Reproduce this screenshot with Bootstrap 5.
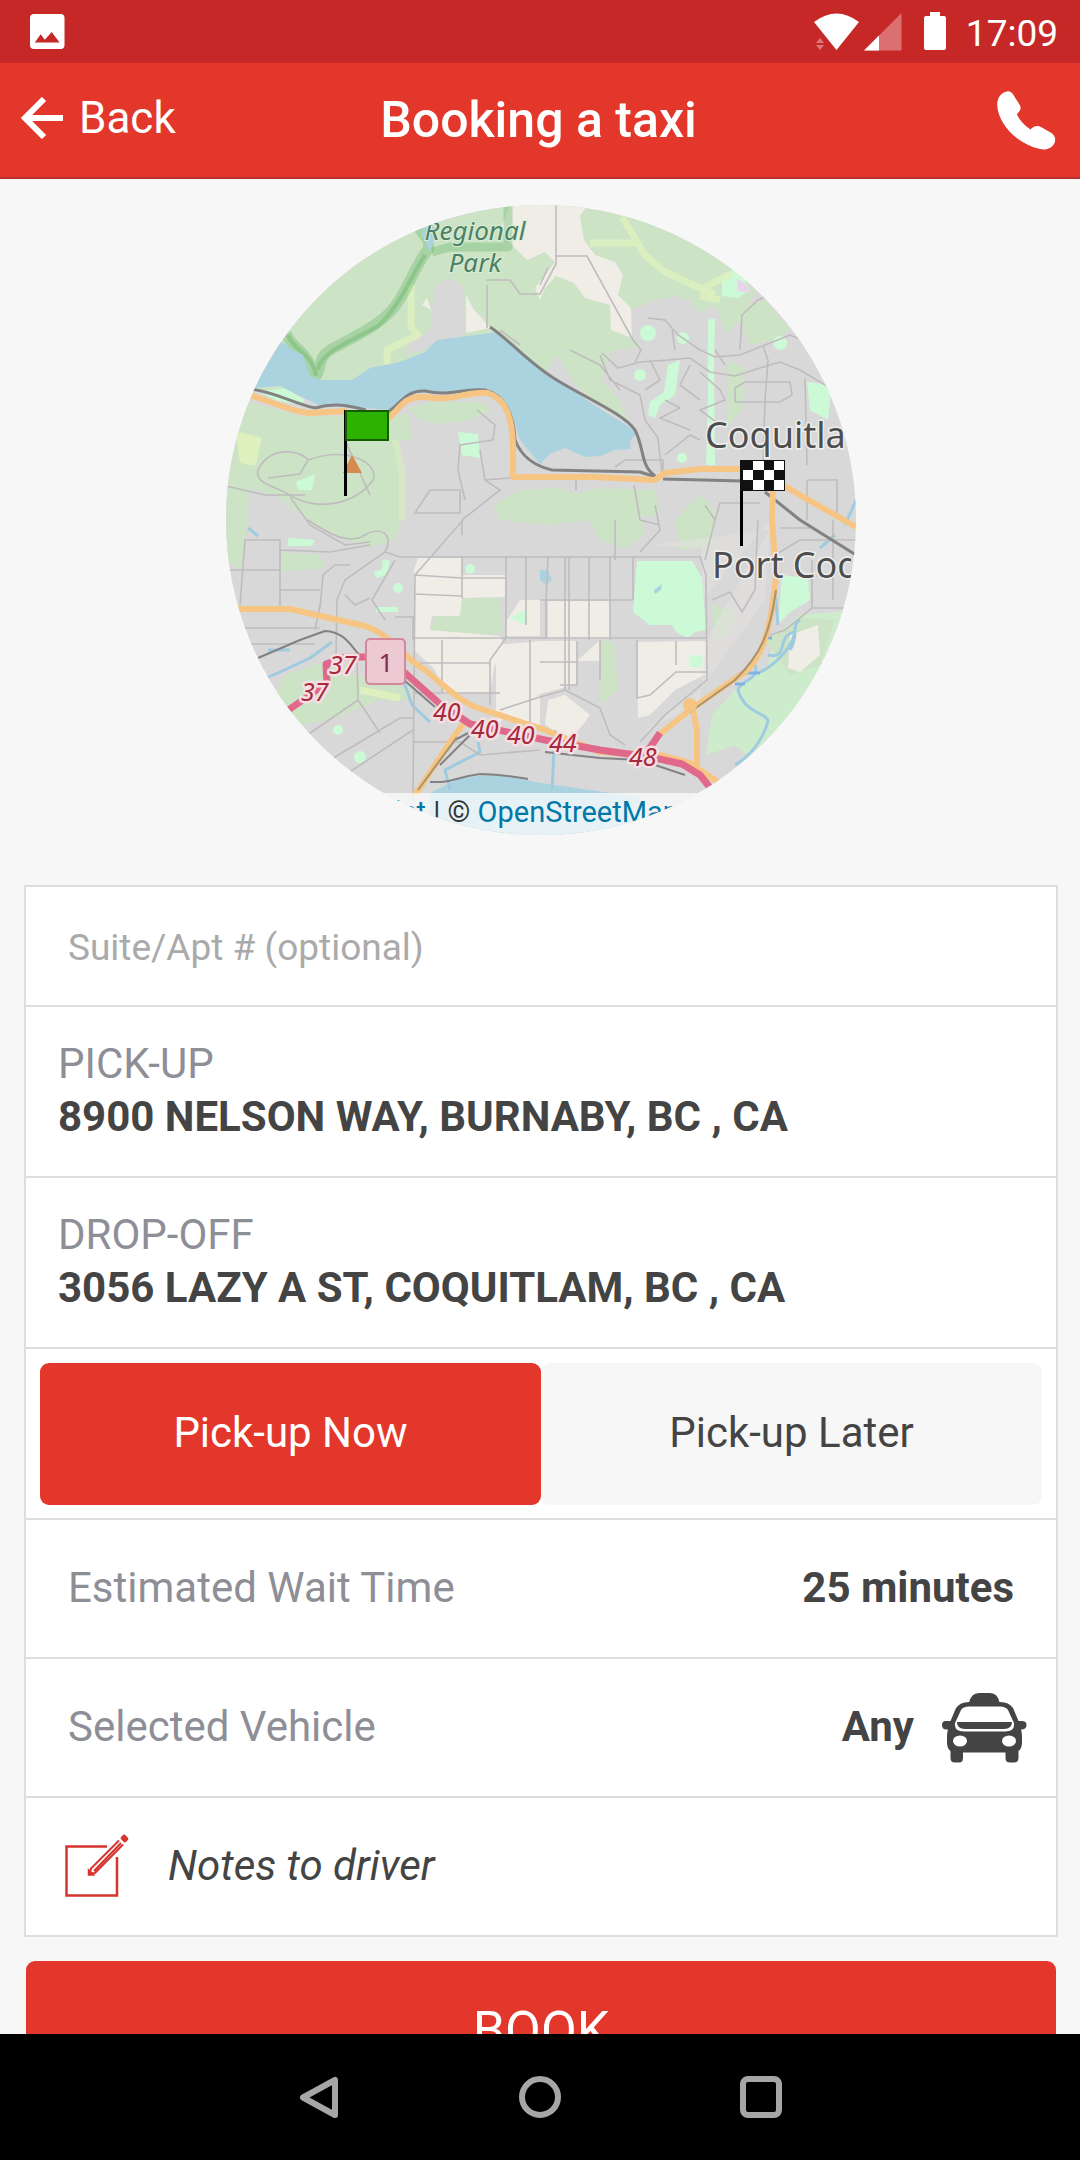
<!DOCTYPE html>
<html lang="en">
<head>
<meta charset="utf-8">
<meta name="viewport" content="width=device-width, initial-scale=1">
<title>Booking a taxi</title>
<link href="https://cdn.jsdelivr.net/npm/bootstrap@5.3.0/dist/css/bootstrap.min.css" rel="stylesheet">
<style>
  :root { --brand: #e3372b; --brand-dark: #c62828; --ink: #444; --soft: #8e8e97; --line: #dedede; --paper: #f7f7f7; }
  body { font-family: Roboto, "Liberation Sans", sans-serif; font-size: 42px; line-height: 53px; color: var(--ink); background: var(--paper); }
  button { color: inherit; }
  .status-bar { background: var(--brand-dark); height: 63px; padding: 0 22px 0 30px; font-size: 37px; }
  .status-bar time { padding-top: 3px; }
  .status-icons { gap: 20px; }
  .app-bar { background: var(--brand); height: 116px; padding: 0 24px 0 21px; border-bottom: 2px solid #b83030; }
  .app-bar h1 { font-size: 50px; font-weight: 500; }
  .app-bar a { font-size: 44px; padding-top: 3px; }
  .app-body { padding: 26px 22px 24px 24px; scrollbar-width: none; }
  .app-body::-webkit-scrollbar { display: none; }
  .map-disc { width: 630px; max-width: 100%; aspect-ratio: 1; margin-bottom: 50px; }
  .map-credit { height: 42px; padding-left: 112px; font-size: 29px; line-height: 38px; background: rgba(255,255,255,.7); color: #333; }
  .map-credit a { color: #0078a8; }
  .booking { --bs-list-group-border-color: var(--line); --bs-list-group-border-width: 2px; --bs-list-group-border-radius: 0; --bs-list-group-color: var(--ink); --bs-list-group-action-color: var(--ink); --bs-list-group-item-padding-x: 42px; --bs-list-group-item-padding-y: 0; }
  .booking > .list-group-item { min-height: 139px; padding-bottom: 3px; }
  .booking > .suite-item { min-height: 122px; padding-top: 3px; padding-bottom: 0; }
  .booking > .stop-item { min-height: 171px; padding-left: 32px; padding-right: 32px; }
  .booking > .when-item { min-height: 171px; padding: 0 14px; }
  .booking > .vehicle-item { padding-right: 29px; }
  .booking > .notes-item { padding-left: 39px; }
  .suite-box { font-size: 37px; line-height: 44px; }
  .suite-box::placeholder { color: #aaa; opacity: 1; }
  .soft-text { color: var(--soft); }
  .when-btn { --bs-btn-font-size: 42px; --bs-btn-line-height: 54px; --bs-btn-padding-y: 43px; --bs-btn-border-radius: 9px; --bs-btn-color: var(--ink); --bs-btn-bg: #f7f7f7; --bs-btn-active-bg: var(--brand); --bs-btn-active-color: #fff; padding-bottom: 45px; }
  .book-btn { --bs-btn-font-size: 52px; --bs-btn-line-height: 60px; --bs-btn-padding-y: 40px; --bs-btn-border-radius: 9px; --bs-btn-color: #fff; --bs-btn-bg: var(--brand); --bs-btn-hover-bg: var(--brand-dark); --bs-btn-hover-color: #fff; margin: 24px 2px 0; }
  .system-nav { height: 126px; }
  .system-nav .btn { width: 221px; }
  .gap-note { gap: 39px; }
  .gap-car { gap: 28px; }
  svg { display: block; flex: none; }
</style>
</head>
<body class="d-flex flex-column vh-100 overflow-hidden">
<div class="status-bar d-flex align-items-center justify-content-between text-white flex-shrink-0">
  <svg width="35" height="35" viewBox="0 0 35 35" aria-hidden="true"><rect width="34.500" height="35" rx="4" fill="#fff"/><path d="M4.800 28.500 10.700 20.300 14.800 25.700 21.700 18 29.600 28.500Z" fill="#c62828"/></svg>
  <div class="status-icons d-flex align-items-center">
    <svg width="132" height="40" viewBox="814 12 132 40" fill="#fff" aria-hidden="true">
      <path d="M814 22Q836.500 5 859 22L836.500 50Z"/>
      <path d="M816 43l4-5 4 5zM816 45h8l-4 5z" fill="#dc7777"/>
      <path d="M864 50.500 901.500 13V50.500Z" fill="#dc7070"/><path d="M864 50.500 879 35.500V50.500Z"/>
      <path d="M930 12h10v4h4q2 0 2 2v30q0 2-2 2h-18q-2 0-2-2V18q0-2 2-2h4z"/>
    </svg>
    <time datetime="17:09">17:09</time>
  </div>
</div>

<header class="app-bar d-flex align-items-center text-white flex-shrink-0">
  <div class="col">
    <a href="#" class="d-inline-flex align-items-center gap-3 text-white text-decoration-none">
      <svg width="42" height="42" viewBox="0 0 42 42" fill="none" stroke="#fff" stroke-width="6" aria-hidden="true"><path d="M23 2 4 21 23 40M4 21H42"/></svg>
      Back
    </a>
  </div>
  <h1 class="m-0">Booking a taxi</h1>
  <div class="col d-flex justify-content-end">
    <button type="button" class="btn border-0 p-0" aria-label="Call">
      <svg width="59" height="59" viewBox="0 0 59 59" fill="#fff" aria-hidden="true"><path d="M10.500.300C13 0 15 1.500 16.500 4L22.500 13.500C24 16 24 18 22.500 20L19.800 23.600C23 30 28 35 33.500 38.600C36 35.500 40 34 44 36L54.500 42C58 44.500 59 48 57.500 52C55 57.500 49 59.500 43 58C20 53 1 33 .200 14C0 7 4 1.500 10.500.300Z"/></svg>
    </button>
  </div>
</header>

<main class="app-body flex-grow-1 overflow-auto">
  <div class="map-disc position-relative rounded-circle overflow-hidden mx-auto">
    <svg width="100%" viewBox="226 205 630 630" role="img" aria-label="Route map from Burnaby to Coquitlam">
      <defs><clipPath id="tile"><rect x="226" y="205" width="625" height="630"/></clipPath></defs>
      <rect x="226" y="205" width="630" height="630" fill="#d9d8d8"/>
      <!-- forest -->
      <g fill="#cde3c6">
        <path d="M200 190H780V285L756 290 740 320 727 335 716 306 695 313 680 296 655 300 632 310 630 335 640 346 610 352 602 380 575 372 560 352 545 375 500 340 440 345 400 370 340 392H200Z"/>
        <path d="M226 398 250 402 300 416 345 416 388 420 408 412 412 440 400 440 402 520 395 540 370 547 345 540 310 522 280 498 226 480Z"/>
        <path d="M408 408 430 402 480 402 492 410 470 420 440 424 420 420Z"/>
        <path d="M493 505 520 490 560 488 590 500 640 510 645 535 625 548 600 540 590 520 550 525 500 520Z"/>
        <path d="M675 520 700 495 715 510 712 545 680 550Z"/>
        <path d="M440 600 500 597 502 633 460 636 430 630 435 616ZM712 605 735 612 730 635 715 640Z"/>
        <path d="M280 552 320 555 325 568 280 572ZM285 675 330 660 355 675 412 690 410 700 380 700 330 720 300 725 275 695Z"/>
        <path d="M602 640 614 642 618 690 600 705Z"/>
        <path d="M555 350 590 370 620 400 630 425 600 405 575 385Z"/>
        <path d="M728 360 745 370 742 410 728 425Z"/>
        <path d="M226 470 250 480 246 540 240 570 226 560ZM735 308 765 300 790 330 775 340 750 345ZM570 495 600 488 655 490 660 515 610 520 580 515Z"/>
      </g>
      <path d="M706 755 712 715 735 690 768 665 775 635 800 615 856 610V740L760 765 735 745Z" fill="#cdeccb"/>
      <path d="M765 640 800 618 835 620 820 665 790 675Z" fill="#cde3c6"/>
      <!-- open land -->
      <g fill="#f0ede7">
        <path d="M510 205H588L580 216 584 240 595 255 615 262 623 275 618 295 631 308 632 338 611 330 610 305 585 298 574 283 556 276 545 288 540 300 535 288 555 262 545 252 527 260 512 245 500 230Z"/>
        <path d="M466 295 474 310 482 318 490 328 466 333ZM427 298 431 310 422 305Z"/>
        <path d="M418 558 462 558V575H505V597L462 598 460 616 432 616 430 630 500 636 504 645 494 668 490 692 445 694 435 670 414 650V570Z"/>
        <path d="M548 601 610 601V639H548ZM540 641 577 641V661H600V640L577 661 576 684 555 690 540 694 520 705 496 725V645ZM520 600 540 600V636H505L507 620ZM637 642 706 641V674L675 690 650 715 638 718ZM548 700 565 695 590 715 585 722 570 740 545 725ZM480 715 540 695V730L490 712Z"/>
        <path d="M790 635 818 625 820 655 800 672 788 668Z"/>
      </g>
      <g fill="#d9d8d8">
        <path d="M435 285 450 278 462 285 466 335 440 340 425 350 405 355 410 342 430 330Z"/>
        <path d="M463 556H505V575H463Z"/>
        <path d="M244 540 262 540 280 555 275 605 240 605Z"/>
        <path d="M632 318 655 300 690 300 702 320 690 350 660 345 640 350Z"/>
      </g>
      <path d="M650 545 702 548 702 600 770 520 765 600 700 690 640 735 700 700 706 640 770 530Z" fill="#e2e1e0" opacity=".6"/>
      <!-- parks -->
      <g fill="#cdfad6">
        <path d="M637 561H692L702 578 706 630 695 632 688 638 676 632 672 625H650L633 612Z"/>
        <path d="M722 275 738 268 750 290 738 298 722 296Z"/>
        <path d="M782 575 808 578 810 600 790 612 778 625Z"/>
        <path d="M807 382 832 385 828 420 810 410Z"/>
        <path d="M708 320 715 318 714 360 715 465 706 465 708 400Z"/>
        <path d="M668 365 680 360 675 395 660 405 655 418 648 415 650 402 664 392Z"/>
        <path d="M288 538 315 540 312 546 288 546ZM458 432 478 434 480 458 462 455ZM296 482 315 474 312 490 298 490ZM376 607 398 607 398 612 376 612ZM510 618 525 610 525 625ZM690 655 703 656 702 668 690 667Z"/>
        <path d="M260 392 285 388 305 400 300 405 275 400Z"/>
        <circle cx="648" cy="333" r="8"/><circle cx="683" cy="338" r="6"/><circle cx="640" cy="375" r="6"/><circle cx="780" cy="343" r="7"/><circle cx="398" cy="588" r="5"/><circle cx="470" cy="569" r="5"/><circle cx="360" cy="757" r="6"/><circle cx="338" cy="730" r="5"/><circle cx="682" cy="458" r="5"/>
      </g>
      <path d="M737 278 748 286 750 293 738 291Z" fill="#e9d5ea"/>
      <g fill="none" stroke="#ddf0bd" stroke-width="7" stroke-linejoin="round">
        <path d="M590 243H635M622 217 645 255 665 272 715 295M700 290 732 273M720 300 700 296M411 285V327L418 335 387 350V368" opacity=".8"/>
        <path d="M375 575 385 572 386 560" stroke="#cdfad6"/>
        <path d="M240 436 258 440 253 462 243 460Z" fill="#ddf0bd"/><path d="M360 690 400 698" /><path d="M395 440 402 470V520" opacity=".5"/>
      </g>
      <g fill="none" stroke="#6fb96f" stroke-linejoin="round">
        <path d="M286 333C292 350 308 350 314 376 322 376 316 358 330 350 352 338 378 326 392 310 408 292 416 262 428 250 432 240 420 232 415 222" stroke-width="11" opacity=".4"/>
        <path d="M288 335C294 352 312 352 316 376M318 370C320 352 350 342 378 326 400 306 412 275 425 255" stroke-width="4" opacity=".45"/>
        <path d="M432 252 450 247H508V206" stroke-width="9" opacity=".4"/>
      </g>
      <!-- water -->
      <g fill="#aad3df">
        <path d="M226 350 283 342 292 350 303 355 310 376 320 380 352 380 370 368 400 362 425 352 437 340 475 335 497 332 515 345 535 365 552 378 575 392 605 412 628 426 637 432 630 442 631 449 615 450 600 456 585 457 565 448 550 454 540 464 520 440 512 415 498 398 484 392 460 394 430 392 415 393 400 405 388 410 345 406 318 405 300 396 280 386 226 390Z"/>
        <path d="M428 205 436 235 430 252 422 235Z"/>
        <path d="M430 793 460 778 500 774 535 782 590 790 640 797V835H430Z"/>
        <path d="M540 570 548 570 552 580 546 585 540 580ZM654 590 662 584 661 590 655 594Z"/>
      </g>
      <g fill="none" stroke="#9fcbe0" stroke-width="3" stroke-linejoin="round">
        <path d="M262 680 280 672 310 658 332 642M404 682 412 705 430 722M450 790 445 770 480 752 478 742M555 730 552 790" />
        <path d="M775 590 778 625M755 665C760 680 740 680 738 690 745 715 768 712 768 722 762 740 752 755 735 765M768 655C790 660 775 635 795 632 790 655 765 670 760 672M790 650C800 635 790 625 800 620M856 500 845 525M835 535 820 548M248 528 258 536M268 650 290 650"/>
        <path d="M764 638H772M745 673H760M735 684H745" stroke="#7fb3e6"/>
      </g>
      <!-- local streets -->
      <g fill="none" stroke="#bfbcbe" stroke-width="1.600">
        <path d="M486 280H510L520 294H540L556 264V205M556 256H587L633 340 641 350 635 362M487 285V328"/>
        <path d="M540 285 548 268M500 330 520 345"/>
        <path d="M602 353 618 368 640 362 668 360 690 358 710 372 735 376 760 368 780 362 800 370 825 385 845 392M600 355 610 380 640 395 645 420 658 438 662 475M763 346 768 360 765 400 763 465M805 378 807 465M672 330 675 350M648 318 665 320 678 335 700 350 715 357 740 355 765 345 790 335 815 345M740 350 742 315 758 300 780 290M735 388 745 382H790L792 395 780 402H735ZM700 372 720 390 725 400 700 410 720 425M665 400 680 408 660 418 690 430M570 350 600 365 620 390M725 365 715 350M650 360 660 380 645 390M690 365 680 385 700 400"/>
        <path d="M258 470C270 445 300 450 308 460 350 445 380 465 373 480 355 505 320 510 295 498 275 485 255 485 258 470ZM226 486 265 495H305M268 478 300 474 308 460M290 497 310 525 345 545 370 542M308 520C330 535 350 545 365 535 380 525 395 535 385 552L345 580 337 600 336 655"/>
        <path d="M477 410 495 425 493 440 460 445 458 470 465 500M485 480 500 490 462 520M430 490H460V513H415L430 490M345 440 370 495M480 450 485 480 510 478"/>
        <path d="M575 477H530M576 478V490M634 485 640 520 660 525M715 520 720 503H760M807 480H837V515M807 480V520M665 455 690 435 700 440M663 475V460H625L615 467"/>
        <path d="M385 552 400 557H700L706 575 707 680 665 715 640 742M463 520 415 575 413 800M462 535V520M462 557V598M506 557V638L490 660V705M526 557V625M414 638H706M414 575 462 578H506M414 594 462 596M442 640V693M414 663H490M414 693H500M530 640V730M500 710 540 697 565 690V557M548 557 546 600V638M569 557V690M589 557V640M610 557V640M540 600H633M633 557V600M565 690 600 708 610 735 625 745M577 641V685H560M600 640V680M637 640V698L650 695 676 672 706 672M676 641V665M540 662H577"/>
        <path d="M244 540H280V608M226 570H280M280 590H320M245 540 240 605M235 628H320M240 644H315M320 608 323 575 335 565H350M280 550 330 552 370 545M320 605 315 630M357 660 358 700 380 733M330 760 400 718H413M300 740 358 700M345 775 413 730M413 742H460L480 755 540 750M395 560 372 600 385 620M345 595 355 605 370 598M395 617H413V640"/>
        <path d="M705 560 715 520 705 505M712 600 730 592 742 612 755 590 757 540 758 520M770 635 785 630 812 608H850M812 608V560M775 555 800 540H856M780 528H810M833 520V600M655 505 660 530 640 552M615 520V560"/>
      </g>
      <!-- railways -->
      <g fill="none" stroke="#828282" stroke-width="3" stroke-linejoin="round">
        <path d="M250 389C275 392 295 404 315 408 335 402 350 406 366 410M388 412C400 405 405 390 425 391 450 397 460 388 485 390 505 395 514 415 515 440 522 458 535 466 552 470L640 472 656 477"/>
        <path d="M490 327C510 340 530 365 560 382 590 400 625 415 635 430 645 450 640 465 655 476M663 479 742 481M765 492 800 520 856 555"/>
        <path d="M258 658 300 640 325 631C345 632 350 645 362 658M404 680 435 707M418 790 455 740 468 733M430 782C455 783 450 778 480 774 510 775 520 778 528 779" stroke-width="2"/>
        <path d="M470 735 440 765M545 752 600 758 640 760 685 775" stroke-width="2"/>
      </g>
      <!-- primary roads -->
      <g fill="none" stroke="#f7c583" stroke-width="6" stroke-linejoin="round">
        <path d="M248 395C270 400 290 412 310 413L347 411M388 418C400 410 402 396 425 397 455 402 465 391 488 393 508 400 512 420 513 445V477H595L655 480 665 473 700 469H745M766 475 800 495 856 527M773 490 772 520 776 575C772 620 765 655 745 672L690 710 655 738M692 704 697 730V765"/>
        <path d="M236 609H290L365 626C390 634 400 655 425 670 440 682 460 702 478 708L545 730 600 752 660 755 690 763 722 785M415 795 455 735 465 722"/>
      </g>
      <path d="M776 590C770 635 760 655 735 680L690 712M418 790 457 737" fill="none" stroke="#a8946f" stroke-width="2"/>
      <circle cx="690" cy="705" r="7" fill="#f7c583"/>
      <!-- motorway -->
      <g fill="none" stroke="#e0688a" stroke-width="7" stroke-linejoin="round"><path d="M287 711 327 683 326 664 345 657H368M404 672 440 704 470 724 545 740 600 750 650 757 682 764 700 775 712 790M647 752 660 733" /></g>
      <!-- place names -->
      <g font-family="'Noto Sans','Open Sans',sans-serif">
        <g font-size="26" font-style="italic" fill="#4c8063" stroke="#d8eed6" stroke-width="2" paint-order="stroke" text-anchor="middle"><text x="475" y="240">Regional</text><text x="475" y="272">Park</text></g>
        <g font-size="36" fill="#4d4d4d" stroke="#eee" stroke-width="3" paint-order="stroke" clip-path="url(#tile)"><text x="705" y="448">Coquitla</text><text x="712" y="578">Port Coq</text></g>
        <g font-size="25" font-style="italic" fill="#a8283c" stroke="#f6dfe3" stroke-width="5" paint-order="stroke" stroke-linejoin="round">
          <text x="329" y="674">37</text><text x="301" y="701">37</text><text x="433" y="721">40</text><text x="471" y="738">40</text><text x="507" y="744">40</text><text x="549" y="752">44</text><text x="629" y="766">48</text>
        </g>
        <rect x="366" y="639" width="39" height="45" rx="4" fill="#edc9d3" stroke="#d4889c" stroke-width="2"/>
        <text x="386" y="672" font-size="26" fill="#803048" text-anchor="middle">1</text>
      </g>
      <path d="M343 473 352 455 362 473Z" fill="#d68a50"/>
      <!-- pick-up and drop-off flags -->
      <path d="M345.500 410V496M741.500 460V546" stroke="#000" stroke-width="3"/>
      <rect x="346" y="411" width="42" height="29" fill="#2db200" stroke="#155c00" stroke-width="2"/>
      <rect x="740" y="460" width="45" height="31" fill="#111"/>
      <path d="M753 461h11v9h-11zM774 461h10v9h-10zM743 470h10v10h-10zM764 470h10v10h-10zM753 480h11v10h-11zM774 480h10v10h-10z" fill="#fff"/>
    </svg>
    <div class="map-credit position-absolute bottom-0 start-0 w-100 text-nowrap"><a href="#" class="text-decoration-none">Leaflet</a> | © <a href="#" class="text-decoration-none">OpenStreetMap</a></div>
  </div>

  <form>
    <div class="list-group booking">
      <div class="list-group-item suite-item d-flex align-items-center">
        <label for="suite" class="visually-hidden">Suite or apartment number</label>
        <input id="suite" type="text" class="suite-box form-control-plaintext p-0 border-0" placeholder="Suite/Apt # (optional)">
      </div>
      <button type="button" class="list-group-item list-group-item-action stop-item d-flex flex-column justify-content-center">
        <span class="soft-text">PICK-UP</span>
        <strong>8900 NELSON WAY, BURNABY, BC , CA</strong>
      </button>
      <button type="button" class="list-group-item list-group-item-action stop-item d-flex flex-column justify-content-center">
        <span class="soft-text">DROP-OFF</span>
        <strong>3056 LAZY A ST, COQUITLAM, BC , CA</strong>
      </button>
      <div class="list-group-item when-item d-flex align-items-center" role="group" aria-label="Pick-up time">
        <input type="radio" class="btn-check" name="when" id="now" checked><label class="btn when-btn border-0 col" for="now">Pick-up Now</label>
        <input type="radio" class="btn-check" name="when" id="later"><label class="btn when-btn border-0 col" for="later">Pick-up Later</label>
      </div>
      <div class="list-group-item d-flex align-items-center justify-content-between">
        <span class="soft-text">Estimated Wait Time</span><strong>25 minutes</strong>
      </div>
      <button type="button" class="list-group-item list-group-item-action vehicle-item d-flex align-items-center justify-content-between">
        <span class="soft-text">Selected Vehicle</span>
        <span class="d-flex align-items-center gap-car"><strong>Any</strong>
          <svg class="mt-1" width="85" height="70" viewBox="0 0 85 70" fill="#444" aria-hidden="true">
            <path d="M27 10Q29 0 37 0H48Q56 0 57.500 10Z"/>
            <path fill-rule="evenodd" d="M27 9H58Q67 9 71 15L76.500 28H80Q84.500 28 84.500 32T80 36.500H79Q80 39 80 43V50Q80 55 76.500 58V65Q76.500 69.500 72 69.500H68Q63.500 69.500 63.500 65V59.500H21V65Q21 69.500 17 69.500H13Q8.500 69.500 8.500 65V58Q5 55 5 50V43Q5 39 6 36.500H4.500Q0 36.500 0 32T4.500 28H8.500L14 15Q18 9 27 9ZM27 13.500Q21 13.500 19 17L13 30Q12 38.500 22 38.500H63Q73 38.500 72 30L66 17Q64 13.500 58 13.500Z"/>
            <path d="M15 29H70Q70 36 62 36H23Q15 36 15 29Z"/>
            <g fill="#fff"><ellipse cx="18" cy="48" rx="7" ry="5.500"/><ellipse cx="67" cy="48" rx="7" ry="5.500"/></g>
          </svg>
        </span>
      </button>
      <button type="button" class="list-group-item list-group-item-action notes-item d-flex align-items-center gap-note">
        <svg width="64" height="63" viewBox="0 0 64 63" fill="none" stroke="#d5352e" stroke-width="2.500" aria-hidden="true">
          <path d="M42 12.500H1.500V61.500H52V23"/>
          <path d="M25 39.500 26 34.500 54 6.500M25 39.500 30 39 58 10.500M29 37 56 9" stroke-width="2"/><path d="M24 40.500V37L27.500 40.500Z" fill="#d5352e"/>
          <rect x="56" y="1.500" width="7" height="6" rx="2" transform="rotate(45 59.500 4.500)" fill="#d5352e" stroke="none"/>
        </svg>
        <em>Notes to driver</em>
      </button>
    </div>
    <div class="d-grid"><button type="submit" class="btn book-btn border-0">BOOK</button></div>
  </form>
</main>

<nav class="system-nav bg-black d-flex justify-content-center align-items-center flex-shrink-0" aria-label="System">
  <button type="button" class="btn border-0 p-0 d-flex justify-content-center" aria-label="Back"><svg width="42" height="43" viewBox="0 0 42 43" fill="none" stroke="#a6a6a6" stroke-width="6" stroke-linejoin="round" aria-hidden="true"><path d="M37 4V39L5 21.500Z"/></svg></button>
  <button type="button" class="btn border-0 p-0 d-flex justify-content-center" aria-label="Home"><svg width="42" height="42" viewBox="0 0 42 42" fill="none" stroke="#a6a6a6" stroke-width="6" aria-hidden="true"><circle cx="21" cy="21" r="18"/></svg></button>
  <button type="button" class="btn border-0 p-0 d-flex justify-content-center" aria-label="Recent apps"><svg width="42" height="42" viewBox="0 0 42 42" fill="none" stroke="#a6a6a6" stroke-width="6" aria-hidden="true"><rect x="3" y="3" width="36" height="36" rx="5"/></svg></button>
</nav>
<script src="https://cdn.jsdelivr.net/npm/bootstrap@5.3.0/dist/js/bootstrap.bundle.min.js"></script>
</body>
</html>
